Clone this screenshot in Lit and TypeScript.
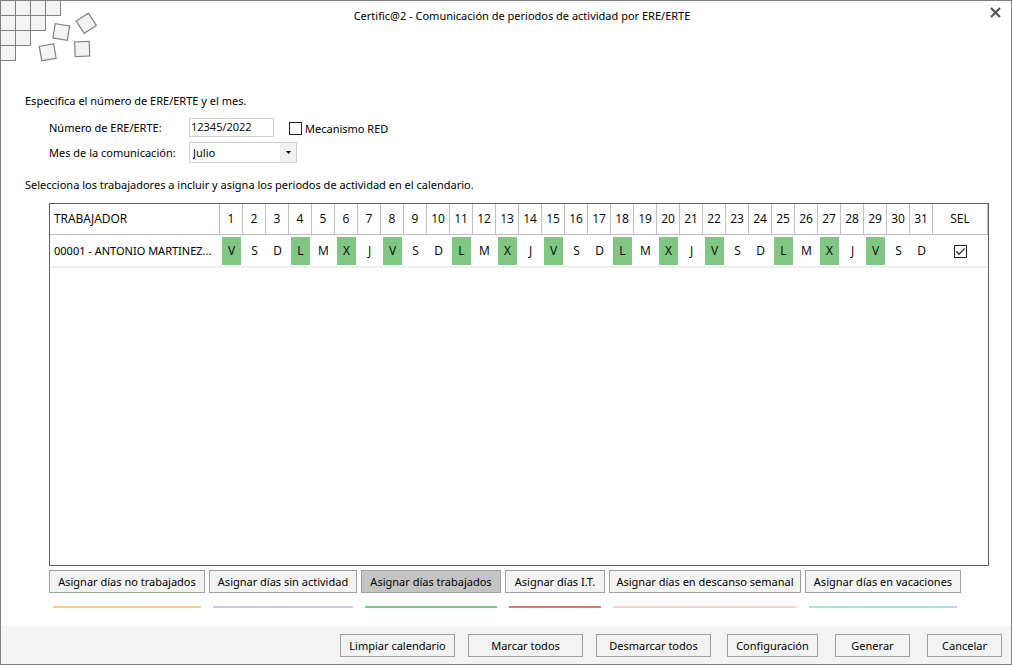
import { LitElement, html, svg, css } from "lit";
import { customElement, state } from "lit/decorators.js";
import { classMap } from "lit/directives/class-map.js";

const MONTHS = [
  "Enero", "Febrero", "Marzo", "Abril", "Mayo", "Junio",
  "Julio", "Agosto", "Septiembre", "Octubre", "Noviembre", "Diciembre",
];
const WEEK = ["V", "S", "D", "L", "M", "X", "J"];
const DAYS = Array.from({ length: 31 }, (_, i) => ({ day: i + 1, letter: WEEK[i % 7] }));

const ASSIGNMENTS = [
  { id: "idle", label: "Asignar días no trabajados" },
  { id: "inactive", label: "Asignar días sin actividad" },
  { id: "worked", label: "Asignar días trabajados" },
  { id: "sick", label: "Asignar días I.T." },
  { id: "rest", label: "Asignar días en descanso semanal" },
  { id: "holiday", label: "Asignar días en vacaciones" },
];

@customElement("app-root")
export class AppRoot extends LitElement {
  @state() private mode = "worked";
  @state() private selected = true;
  @state() private worked = new Set(
    DAYS.filter((d) => ["V", "L", "X"].includes(d.letter)).map((d) => d.day),
  );

  static styles = css`
    :host {
      display: flex;
      flex-direction: column;
      box-sizing: border-box;
      min-height: 100vh;
      border: 1px solid #808080;
      background: #fff;
      color: #000;
      font: 11px/16px "Noto Sans", "Open Sans", sans-serif;
    }
    * { box-sizing: border-box; }
    button, input, select { font: inherit; color: inherit; margin: 0; border-radius: 0; }
    header {
      display: grid;
      grid-template-columns: 98px 1fr 66px;
      align-items: start;
      height: 62px;
    }
    .deco { display: block; margin: -1px 0 0 -1px; }
    h1 {
      margin: 0;
      padding-top: 7px;
      text-align: center;
      font-size: 11px;
      line-height: 16px;
      font-weight: 400;
    }
    .close {
      justify-self: end;
      display: flex;
      padding: 6px 10px;
      border: 0;
      background: none;
    }
    main {
      flex: 1;
      display: flex;
      flex-direction: column;
      padding: 30px 22px 18px 24px;
    }
    p { margin: 0; }
    .form {
      display: grid;
      grid-template-columns: 140px 1fr;
      row-gap: 5px;
      align-items: center;
      padding: 9px 0 14px 24px;
    }
    .line { display: flex; align-items: center; }
    .number {
      width: 85px;
      height: 19px;
      margin-right: 15px;
      padding: 0 1px 2px;
      border: 1px solid #d0d0d0;
      background: #fff;
      font-family: "Open Sans", "Noto Sans", sans-serif;
    }
    .check { display: flex; align-items: center; gap: 3px; padding-top: 2px; }
    .box { display: grid; width: 13px; height: 13px; }
    .box input, .box svg { grid-area: 1 / 1; }
    .box input {
      appearance: none;
      width: 13px;
      height: 13px;
      border: 1px solid #222;
      background: #fff;
    }
    .box svg { visibility: hidden; pointer-events: none; z-index: 1; }
    .box input:checked + svg { visibility: visible; }
    .month { display: grid; width: 108px; align-items: center; }
    .month select, .month svg { grid-area: 1 / 1; }
    .month select {
      appearance: none;
      width: 100%;
      height: 21px;
      padding: 0 20px 0 3px;
      border: 1px solid #d0d0d0;
      background: linear-gradient(#f0f0f0, #f0f0f0) right / 16px 100% no-repeat #fff;
    }
    .month svg { justify-self: end; margin-right: 6px; pointer-events: none; z-index: 1; }
    .frame {
      flex: 1;
      min-height: 200px;
      margin: 10px 0 0 24px;
      border: 1px solid #606060;
    }
    table {
      width: 100%;
      table-layout: fixed;
      border-collapse: separate;
      border-spacing: 0;
      font: 12px/16px "Open Sans", "Noto Sans", sans-serif;
    }
    .day { width: 23px; }
    .sel { width: 55px; }
    th {
      height: 31px;
      padding: 0;
      border-right: 1px solid #c0c0c0;
      border-bottom: 1px solid #c0c0c0;
      font-weight: 400;
    }
    td { height: 33px; padding: 2px 2px 1px; border-bottom: 2px solid #efefef; text-align: center; }
    .name {
      padding: 0 4px;
      text-align: left;
      white-space: nowrap;
    }
    td.name { font: 11px/16px "Noto Sans", "Open Sans", sans-serif; }
    .mark {
      display: block;
      width: 19px;
      height: 28px;
      padding: 0;
      border: 0;
      background: none;
    }
    .mark.on { background: #81c784; }
    .pick { display: inline-grid; vertical-align: middle; }
    .actions { display: flex; flex-wrap: wrap; gap: 4px; padding: 4px 0 0 24px; }
    .action { display: grid; gap: 13px; }
    .btn {
      height: 23px;
      padding: 0;
      border: 1px solid #a0a0a0;
      background: #f3f3f3;
      white-space: nowrap;
      line-height: 16px;
    }
    .btn.active { background: #c4c4c4; }
    .swatch { height: 2px; margin: 0 4px; }
    .idle, .holiday { width: 156px; }
    .inactive { width: 148px; }
    .worked { width: 140px; }
    .sick { width: 100px; }
    .rest { width: 192px; }
    .idle .swatch { background: #ffcc80; }
    .inactive .swatch { background: #d1c4e9; }
    .worked .swatch { background: #81c784; }
    .sick .swatch { background: #e57373; }
    .rest .swatch { background: #ffcdd2; }
    .holiday .swatch { background: #b2dfdb; }
    footer {
      display: flex;
      justify-content: flex-end;
      gap: 16px;
      padding: 8px 9px 7px;
      background: #f3f3f3;
    }
    .group { display: flex; gap: 13px; }
    .group.main { gap: 17px; }
    .wide { width: 115px; }
    .medium { width: 91px; }
    .small { width: 75px; }
  `;

  private toggle(day: number) {
    const next = new Set(this.worked);
    next.has(day) ? next.delete(day) : next.add(day);
    this.worked = next;
  }

  private decoration() {
    const cells = [4, 3, 2, 1].flatMap((count, row) =>
      Array.from({ length: count }, (_, col) => [col * 15, row * 15]),
    );
    const loose = [[61.3, 32, 9], [86.3, 23.3, -33], [47.7, 52.3, -10], [82.2, 49, -2]];
    return html`<svg class="deco" width="99" height="63" fill="#f3f3f3" stroke="#808080" aria-hidden="true">
      ${cells.map(([x, y]) => svg`<rect x=${x + 0.5} y=${y + 0.5} width="15" height="15"/>`)}
      ${loose.map(([x, y, a]) => svg`<rect x="-7.3" y="-7.3" width="14.6" height="14.6" stroke-width="1.2" transform=${`translate(${x} ${y}) rotate(${a})`}/>`)}
    </svg>`;
  }

  private tick() {
    return html`<svg width="13" height="13" fill="none" stroke="#333" stroke-width="1.3" aria-hidden="true">
      <path d="M2.3 6.3 5 9.2 10.8 3.4"/>
    </svg>`;
  }

  render() {
    return html`
      <header>
        ${this.decoration()}
        <h1>Certific@2 - Comunicación de periodos de actividad por ERE/ERTE</h1>
        <button class="close" aria-label="Cerrar">
          <svg width="11" height="11" stroke="#555" stroke-width="2.2" aria-hidden="true">
            <path d="M1 1 10 10M10 1 1 10"/>
          </svg>
        </button>
      </header>
      <main>
        <p>Especifica el número de ERE/ERTE y el mes.</p>
        <div class="form">
          <label for="number">Número de ERE/ERTE:</label>
          <div class="line">
            <input id="number" class="number" type="text" value="12345/2022" />
            <label class="check">
              <span class="box"><input type="checkbox" />${this.tick()}</span>
              Mecanismo RED
            </label>
          </div>
          <label for="month">Mes de la comunicación:</label>
          <div class="month">
            <select id="month">
              ${MONTHS.map((m) => html`<option ?selected=${m === "Julio"}>${m}</option>`)}
            </select>
            <svg width="5" height="3" aria-hidden="true"><path d="M0 0H5L2.5 3Z"/></svg>
          </div>
        </div>
        <p>Selecciona los trabajadores a incluir y asigna los periodos de actividad en el calendario.</p>
        <div class="frame">
          <table>
            <thead>
              <tr>
                <th class="name">TRABAJADOR</th>
                ${DAYS.map((d) => html`<th class="day">${d.day}</th>`)}
                <th class="sel">SEL</th>
              </tr>
            </thead>
            <tbody>
              <tr>
                <td class="name">00001 - ANTONIO MARTINEZ...</td>
                ${DAYS.map((d) => html`<td>
                  <button
                    class=${classMap({ mark: true, on: this.worked.has(d.day) })}
                    @click=${() => this.toggle(d.day)}
                  >${d.letter}</button>
                </td>`)}
                <td>
                  <label class="box pick">
                    <input
                      type="checkbox"
                      aria-label="Seleccionar trabajador"
                      .checked=${this.selected}
                      @change=${(e: Event) => (this.selected = (e.target as HTMLInputElement).checked)}
                    />${this.tick()}
                  </label>
                </td>
              </tr>
            </tbody>
          </table>
        </div>
        <div class="actions">
          ${ASSIGNMENTS.map((a) => html`<div class="action ${a.id}">
            <button
              class=${classMap({ btn: true, active: this.mode === a.id })}
              @click=${() => (this.mode = a.id)}
            >${a.label}</button>
            <div class="swatch"></div>
          </div>`)}
        </div>
      </main>
      <footer>
        <div class="group">
          <button class="btn wide">Limpiar calendario</button>
          <button class="btn wide">Marcar todos</button>
          <button class="btn wide">Desmarcar todos</button>
        </div>
        <div class="group main">
          <button class="btn medium">Configuración</button>
          <button class="btn small">Generar</button>
          <button class="btn small">Cancelar</button>
        </div>
      </footer>
    `;
  }
}
